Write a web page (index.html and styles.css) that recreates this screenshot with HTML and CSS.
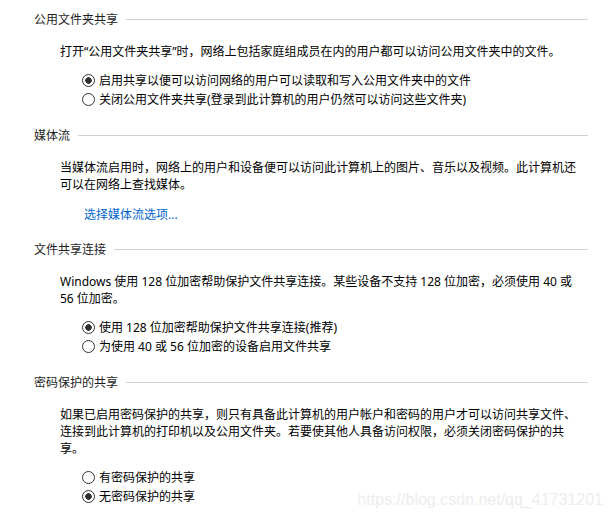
FILE: index.html
```html
<!DOCTYPE html>
<html lang="zh-CN">
<head>
  <meta charset="UTF-8">
  <meta name="viewport" content="width=device-width, initial-scale=1.0">
  <title>高级共享设置</title>
  <link rel="stylesheet" href="styles.css">
</head>
<body>
  <div class="page">

    <div class="section">
      <div class="section-title"><span>公用文件夹共享</span></div>
      <p class="desc">打开“公用文件夹共享”时，网络上包括家庭组成员在内的用户都可以访问公用文件夹中的文件。</p>
      <div class="options">
        <label class="option"><input type="radio" name="public" checked>启用共享以便可以访问网络的用户可以读取和写入公用文件夹中的文件</label>
        <label class="option"><input type="radio" name="public">关闭公用文件夹共享(登录到此计算机的用户仍然可以访问这些文件夹)</label>
      </div>
    </div>

    <div class="section">
      <div class="section-title"><span>媒体流</span></div>
      <p class="desc">当媒体流启用时，网络上的用户和设备便可以访问此计算机上的图片、音乐以及视频。此计算机还可以在网络上查找媒体。</p>
      <a class="link" href="#">选择媒体流选项...</a>
    </div>

    <div class="section">
      <div class="section-title"><span>文件共享连接</span></div>
      <p class="desc">Windows 使用 128 位加密帮助保护文件共享连接。某些设备不支持 128 位加密，必须使用 40 或 56 位加密。</p>
      <div class="options">
        <label class="option"><input type="radio" name="crypt" checked>使用 128 位加密帮助保护文件共享连接(推荐)</label>
        <label class="option"><input type="radio" name="crypt">为使用 40 或 56 位加密的设备启用文件共享</label>
      </div>
    </div>

    <div class="section">
      <div class="section-title"><span>密码保护的共享</span></div>
      <p class="desc">如果已启用密码保护的共享，则只有具备此计算机的用户帐户和密码的用户才可以访问共享文件、连接到此计算机的打印机以及公用文件夹。若要使其他人具备访问权限，必须关闭密码保护的共享。</p>
      <div class="options">
        <label class="option"><input type="radio" name="pwd">有密码保护的共享</label>
        <label class="option"><input type="radio" name="pwd" checked>无密码保护的共享</label>
      </div>
    </div>

  </div>
  <div class="watermark">https://blog.csdn.net/qq_41731201</div>
</body>
</html>
```

FILE: styles.css
```css
body {
  margin: 0;
  background: #ffffff;
  color: #000000;
  font-family: "Noto Sans", "Noto Sans CJK SC", "Microsoft YaHei", sans-serif;
  font-size: 12px;
  line-height: 17px;
}

.page {
  padding: 11px 23px 0 34px;
}

.section {
  margin-bottom: 18px;
}

.section-title {
  display: flex;
  align-items: center;
  height: 17px;
  color: #1e1e1e;
}

.section-title::after {
  content: "";
  flex: 1;
  height: 1px;
  margin-left: 8px;
  margin-top: -1px;
  background: #d2d2d2;
}

.desc {
  width: 522px;
  margin: 15px 0 0 26px;
}

.options {
  margin: 11px 0 0 48px;
}

.option {
  display: flex;
  align-items: center;
  height: 19px;
  white-space: nowrap;
}

.option input {
  appearance: none;
  -webkit-appearance: none;
  width: 13px;
  height: 13px;
  margin: 0 4px 0 0;
  border: 1px solid #333333;
  border-radius: 50%;
  background: #ffffff;
  flex-shrink: 0;
}

.option input:checked {
  background: radial-gradient(circle, #333333 0 3px, #ffffff 3.5px);
}

.link {
  display: block;
  width: max-content;
  margin: 13px 0 0 50px;
  color: #0066cc;
  text-decoration: none;
}

.watermark {
  position: absolute;
  right: 8px;
  top: 491px;
  font-family: "Liberation Sans", Arial, sans-serif;
  font-size: 16px;
  line-height: 18px;
  color: #ededed;
}
```
